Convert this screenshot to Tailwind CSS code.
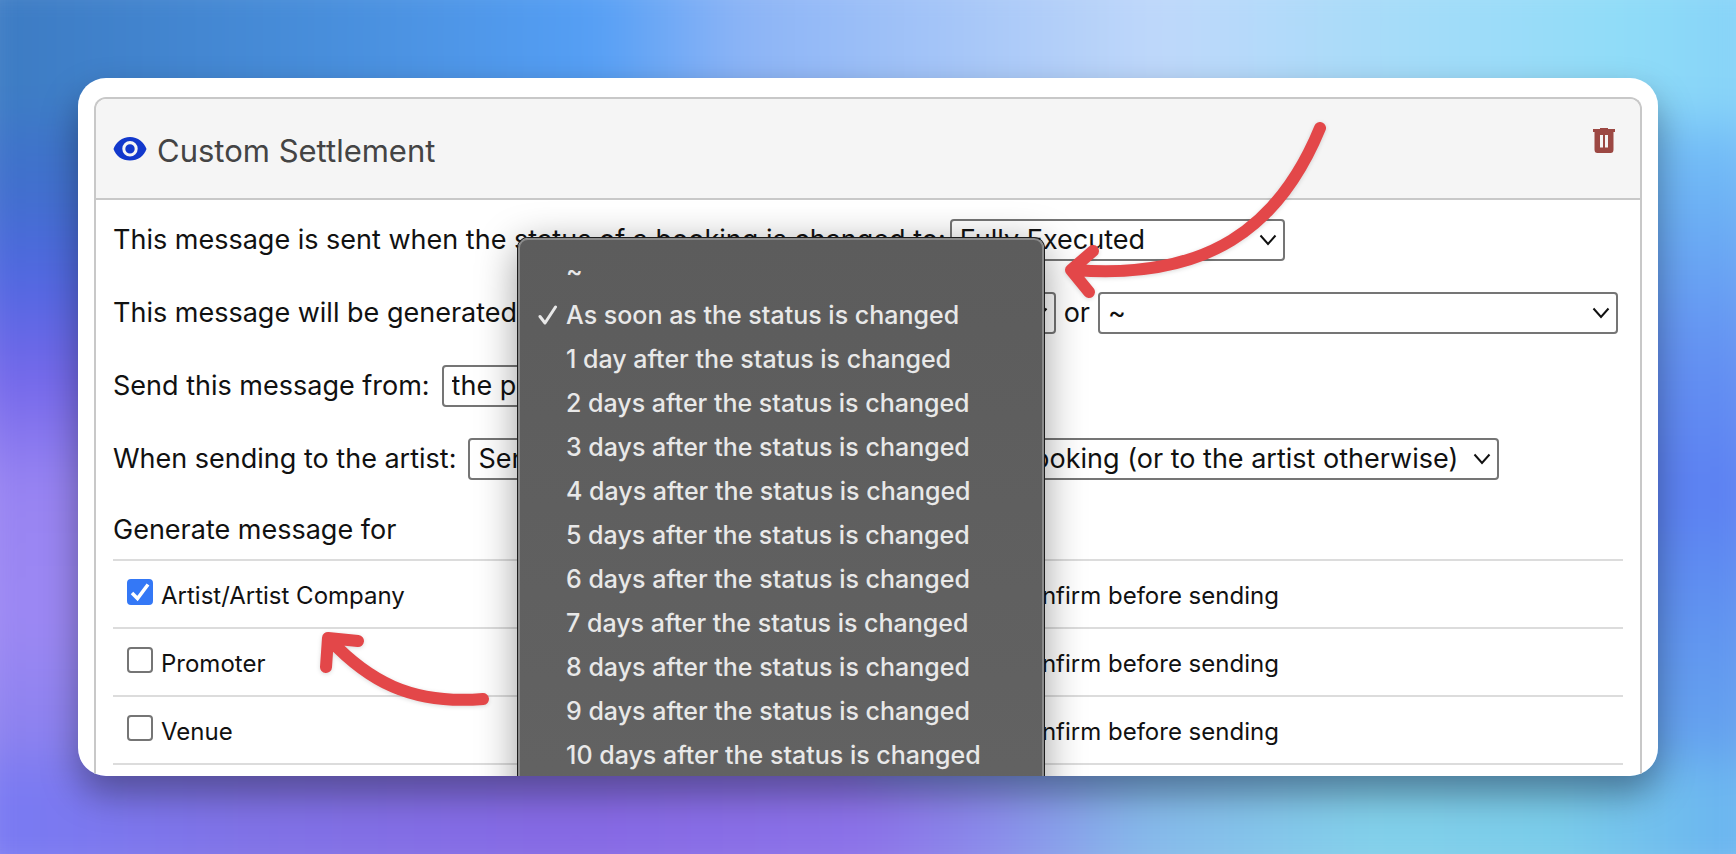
<!doctype html>
<html lang="en">
  <head>
    <title>Custom Settlement</title>

    <meta charset="UTF-8" />
    <meta name="viewport" content="width=device-width, initial-scale=1.0" />

    <script src="https://cdn.jsdelivr.net/npm/@tailwindcss/browser@4"></script>
  </head>
  <body class="font-['Inter',sans-serif] text-[#111]">
    <main class="relative flex h-screen overflow-hidden p-[78px]">
      <!-- blurred wallpaper -->
      <div class="absolute -inset-10 flex flex-col blur-xl" aria-hidden="true">
        <div class="h-[160px] bg-[linear-gradient(90deg,#3d7cc4_3%,#488edb_20%,#559ff5_35%,#8cb4f6_43%,#a6c6f8_55%,#bfd8fa_66%,#a4dcf9_80%,#8fdcf8_92%,#84d0f8_100%)]"></div>
        <div class="flex flex-1">
          <div class="flex-1 bg-[linear-gradient(180deg,#3e76c8_0%,#4070cc_10%,#5068e0_24%,#7468ea_40%,#9884f2_57%,#9c88f3_78%,#8880ee_100%)]"></div>
          <div class="flex-1 bg-[linear-gradient(180deg,#78c4f8_0%,#6cb0f4_14%,#6492f2_36%,#5c80f2_58%,#6092f0_76%,#66a6ee_100%)]"></div>
        </div>
        <div class="h-[130px] bg-[linear-gradient(90deg,#7a7af2_4%,#8072e6_16%,#8669e4_34%,#8b72e8_50%,#8a8cea_57%,#86b8ea_65%,#82d0ea_78%,#7accea_88%,#6ab4f0_98%)]"></div>
      </div>

      <section
        class="relative w-full rounded-[28px] shadow-[0_18px_36px_rgba(0,0,0,0.36)]"
      >
        <div class="relative h-full overflow-hidden rounded-[28px] bg-white px-4 pt-[19px]">
          <div class="h-full rounded-t-xl border-2 border-b-0 border-[#c8c8c8]">
            <header
              class="flex h-[101px] items-start justify-between rounded-t-[10px] border-b-2 border-[#c8c8c8] bg-[#f5f5f5] pr-[25px] pl-[17px]"
            >
              <h1 class="flex items-center gap-[10px] pt-8 text-[31px] leading-10 text-[#444]">
                <svg viewBox="0 0 34 24" class="mb-1 h-6 w-[34px]" aria-hidden="true">
                  <path
                    fill="#1238cc"
                    fill-rule="evenodd"
                    d="M17 0C9 0 3 5 0.5 12C3 19 9 23.500 17 23.500S31 19 33.500 12C31 5 25 0 17 0ZM17 19.500a7.700 7.700 0 1 1 0-15.400a7.700 7.700 0 0 1 0 15.400ZM17 7.200a4.700 4.700 0 1 0 0 9.400a4.700 4.700 0 0 0 0-9.400Z"
                  />
                </svg>
                Custom Settlement
              </h1>
              <button type="button" aria-label="Delete" class="mt-[29px]">
                <svg viewBox="0 0 22 25" class="h-[25px] w-[22px]">
                  <path
                    fill="#9c4843"
                    fill-rule="evenodd"
                    d="M7 0H15V1H22V4H20.500V21.500Q20.500 25 17.500 25H4.500Q1.500 25 1.500 21.500V4H0V1H7ZM7 7V19.500H10V7ZM12 7V19.500H15V7Z"
                  />
                </svg>
              </button>
            </header>

            <form class="px-[17px] pt-[19px]">
              <div class="flex flex-col gap-[31px] text-[27px] leading-[42px] whitespace-nowrap">
                <div class="flex gap-1">
                  <label for="status">This message is sent when the status of a booking is changed to:</label>
                  <div class="grid w-[335px] items-center">
                    <select id="status" class="col-start-1 row-start-1 h-[42px] appearance-none rounded-[4px] border-2 border-[#757575] bg-white pl-2 leading-9">
                      <option>Fully Executed</option>
                    </select>
                    <svg viewBox="0 0 18 12" class="pointer-events-none col-start-1 row-start-1 mr-2 h-3 w-[18px] justify-self-end"><path d="M1.500 1.500L9 10L16.500 1.500" fill="none" stroke="#111" stroke-width="2" /></svg>
                  </div>
                </div>

                <div class="flex">
                  <label for="timing" class="pr-3">This message will be generated:</label>
                  <div class="grid flex-1 items-center">
                    <select id="timing" class="col-start-1 row-start-1 h-[42px] appearance-none rounded-[4px] border-2 border-[#757575] bg-white pl-2 leading-9">
                      <option>As soon as the status is changed</option>
                    </select>
                    <svg viewBox="0 0 18 12" class="pointer-events-none col-start-1 row-start-1 mr-2 h-3 w-[18px] justify-self-end"><path d="M1.500 1.500L9 10L16.500 1.500" fill="none" stroke="#111" stroke-width="2" /></svg>
                  </div>
                  <label for="event" class="px-2">or</label>
                  <div class="mr-[5px] grid w-[520px] items-center">
                    <select id="event" class="col-start-1 row-start-1 h-[42px] appearance-none rounded-[4px] border-2 border-[#757575] bg-white pl-2 leading-9">
                      <option>~</option>
                    </select>
                    <svg viewBox="0 0 18 12" class="pointer-events-none col-start-1 row-start-1 mr-2 h-3 w-[18px] justify-self-end"><path d="M1.500 1.500L9 10L16.500 1.500" fill="none" stroke="#111" stroke-width="2" /></svg>
                  </div>
                </div>

                <div class="flex gap-3">
                  <label for="sender">Send this message from:</label>
                  <div class="grid w-[400px] items-center">
                    <select id="sender" class="col-start-1 row-start-1 h-[42px] appearance-none rounded-[4px] border-2 border-[#757575] bg-white pl-2 leading-9">
                      <option>the person</option>
                    </select>
                  </div>
                </div>

                <div class="flex gap-3">
                  <label for="artist">When sending to the artist:</label>
                  <div class="grid w-[1031px] items-center">
                    <select id="artist" class="col-start-1 row-start-1 h-[42px] appearance-none rounded-[4px] border-2 border-[#757575] bg-white pl-2 leading-9">
                      <option>Send to the artist contact that is set in the booking (or to the artist otherwise)</option>
                    </select>
                    <svg viewBox="0 0 18 12" class="pointer-events-none col-start-1 row-start-1 mr-2 h-3 w-[18px] justify-self-end"><path d="M1.500 1.500L9 10L16.500 1.500" fill="none" stroke="#111" stroke-width="2" /></svg>
                  </div>
                </div>
              </div>

              <h2 class="pt-[29px] pb-2 text-[27px] leading-[42px]">Generate message for</h2>

              <table class="w-full table-fixed border-collapse text-[24px] leading-9 whitespace-nowrap">
                <tbody id="recipients"></tbody>
              </table>
            </form>
          </div>

          <!-- open list of the "generated" drop-down -->
          <ul
            id="menu"
            role="listbox"
            class="absolute top-[160px] left-[440px] h-[620px] w-[526px] rounded-t-[10px] border-2 border-[#8a8a8a] bg-linear-to-b from-[#5c5c5c] to-[#636363] pt-[9px] text-[25px] leading-[44px] font-medium text-[#e8e8e8] shadow-[0_0_0_1px_#1c1c1c,0_8px_40px_rgba(0,0,0,0.4)]"
          ></ul>
        </div>
      </section>

      <svg
        viewBox="0 0 1736 854"
        class="pointer-events-none absolute inset-0 h-full w-full drop-shadow-sm"
        fill="none"
        stroke="#e34749"
        stroke-width="12"
        stroke-linecap="round"
        stroke-linejoin="round"
      >
        <path d="M1320 128C1279 228 1207 280 1075 270M1093 251L1071 270L1089 292" />
        <path d="M483 699C410 705 368 680 330 640M358 641L328 638L326 667" />
      </svg>
    </main>

    <script>
      const recipients = [
        { name: "Artist/Artist Company", checked: true },
        { name: "Promoter" },
        { name: "Venue" },
      ];

      const box = (id, checked) => `
        <input type="checkbox" id="${id}" ${checked ? "checked" : ""}
          class="peer col-start-1 row-start-1 size-[26px] appearance-none rounded-[4px] border-2 border-[#757575] bg-white checked:border-[#3478f6] checked:bg-[#3478f6]" />
        <svg viewBox="0 0 26 26" class="pointer-events-none col-start-1 row-start-1 hidden size-[26px] peer-checked:block">
          <path d="M5 14L10.500 19.500L21 5.500" fill="none" stroke="#fff" stroke-width="3.500" />
        </svg>`;

      document.getElementById("recipients").innerHTML = recipients
        .map(
          ({ name, checked }, i) => `
          <tr class="h-[68px] border-y-2 border-[#dcdcdc]">
            <td class="w-[849px] pt-1 pl-[14px]">
              <div class="flex items-center gap-2">
                <span class="mb-2 grid">${box(`to-${i}`, checked)}</span>
                <label for="to-${i}">${name}</label>
              </div>
            </td>
            <td class="pt-1 pl-[14px]">
              <div class="flex items-center gap-2">
                <span class="mb-2 grid">${box(`confirm-${i}`, false)}</span>
                <label for="confirm-${i}">Confirm before sending</label>
              </div>
            </td>
          </tr>`,
        )
        .join("");

      const options = ["~", "As soon as the status is changed"];
      for (let n = 1; n <= 10; n++) {
        options.push(`${n} day${n > 1 ? "s" : ""} after the status is changed`);
      }

      document.getElementById("menu").innerHTML = options
        .map(
          (text, i) => `
          <li role="option" aria-selected="${i === 1}" class="group flex items-center gap-2 pl-[18px]">
            <svg viewBox="0 0 20 20" class="invisible size-5 group-aria-selected:visible">
              <path d="M2 11.500L7 18L17.500 2" fill="none" stroke="currentColor" stroke-width="3" stroke-linecap="round" stroke-linejoin="round" />
            </svg>
            ${text}
          </li>`,
        )
        .join("");
    </script>
  </body>
</html>
